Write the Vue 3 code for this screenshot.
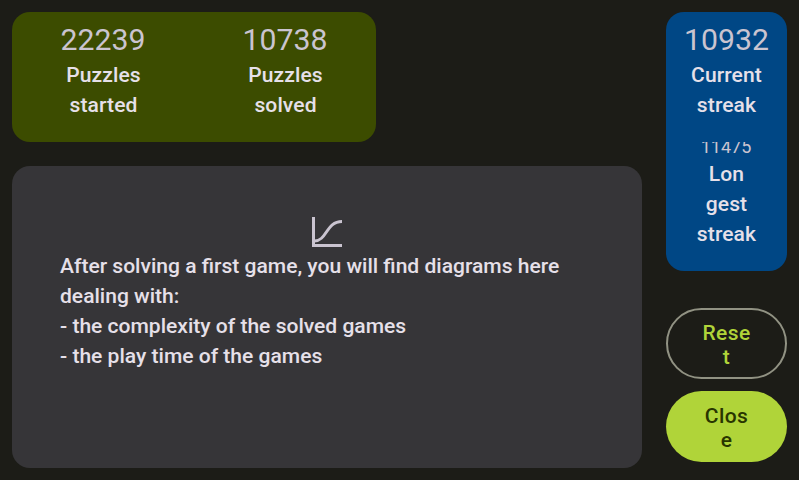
<script setup>
const totals = [
  { value: '22239', lines: ['Puzzles', 'started'] },
  { value: '10738', lines: ['Puzzles', 'solved'] },
]
const streaks = [
  { value: '10932', lines: ['Current', 'streak'] },
  { value: '11475', lines: ['Lon', 'gest', 'streak'], small: true },
]
const notes = [
  'After solving a first game, you will find diagrams here',
  'dealing with:',
  '- the complexity of the solved games',
  '- the play time of the games',
]
</script>

<template>
  <div class="screen">
    <main class="main">
      <section class="card totals">
        <div v-for="t in totals" :key="t.value" class="stat">
          <div class="value">{{ t.value }}</div>
          <div v-for="l in t.lines" :key="l" class="label">{{ l }}</div>
        </div>
      </section>
      <section class="card info">
        <svg class="chart" viewBox="0 0 30 30" width="30" height="30" fill="none">
          <path d="M1.5 0V28.5H30" stroke="#cac4d0" stroke-width="3" />
          <path d="M2.5 24C15 24 14 4.5 30 4.5" stroke="#cac4d0" stroke-width="2.8" />
        </svg>
        <div class="notes">
          <div v-for="n in notes" :key="n" class="label">{{ n }}</div>
        </div>
      </section>
    </main>
    <aside class="side">
      <section class="card streaks">
        <div v-for="s in streaks" :key="s.value" class="stat">
          <div class="value" :class="{ small: s.small }"><span>{{ s.value }}</span></div>
          <div v-for="l in s.lines" :key="l" class="label">{{ l }}</div>
        </div>
      </section>
      <button class="btn outlined">Rese<br />t</button>
      <button class="btn filled">Clos<br />e</button>
    </aside>
  </div>
</template>

<style>
body {
  background: #1c1c17;
}
</style>

<style scoped>
.screen {
  box-sizing: border-box;
  width: 799px;
  height: 480px;
  padding: 12px;
  display: flex;
  gap: 24px;
  overflow: hidden;
  background: #1c1c17;
  font-family: Roboto, sans-serif;
  color: #e6e0e9;
}
.main {
  width: 630px;
  display: flex;
  flex-direction: column;
  gap: 24px;
}
.card {
  border-radius: 18px;
  box-sizing: border-box;
}
.totals {
  width: 364px;
  height: 130px;
  display: grid;
  grid-template-columns: 182px 182px;
  background: #3c4c00;
}
.stat {
  text-align: center;
}
.value {
  height: 48px;
  line-height: 56px;
  font-size: 30.2px;
  color: #cac4d0;
}
.label {
  height: 30px;
  line-height: 30px;
  font-size: 21.05px;
  font-weight: 500;
  white-space: nowrap;
}
.stat .label {
  letter-spacing: 0.1px;
}
.totals .label {
  padding-left: 1px;
}
.info {
  height: 302px;
  padding: 51px 48px 0;
  background: #363538;
  display: flex;
  flex-direction: column;
}
.chart {
  align-self: center;
  display: block;
}
.notes {
  margin-top: 4px;
}
.side {
  width: 121px;
  display: flex;
  flex-direction: column;
}
.streaks {
  height: 259px;
  background: #004785;
}
.streaks .stat + .stat {
  margin-top: 22px;
}
.small {
  height: 17px;
  padding-right: 1px;
  box-sizing: border-box;
  overflow: hidden;
  line-height: 10px;
  font-size: 18px;
}
.btn {
  box-sizing: border-box;
  width: 121px;
  height: 71px;
  padding: 2px 0 0;
  border: 0;
  border-radius: 36px;
  font: 500 21px/24px Roboto, sans-serif;
  letter-spacing: 0.4px;
}
.outlined {
  margin-top: 37px;
  border: 2px solid #919283;
  background: transparent;
  color: #b0d439;
}
.filled {
  margin-top: 12px;
  background: #b0d439;
  color: #283500;
}
</style>
